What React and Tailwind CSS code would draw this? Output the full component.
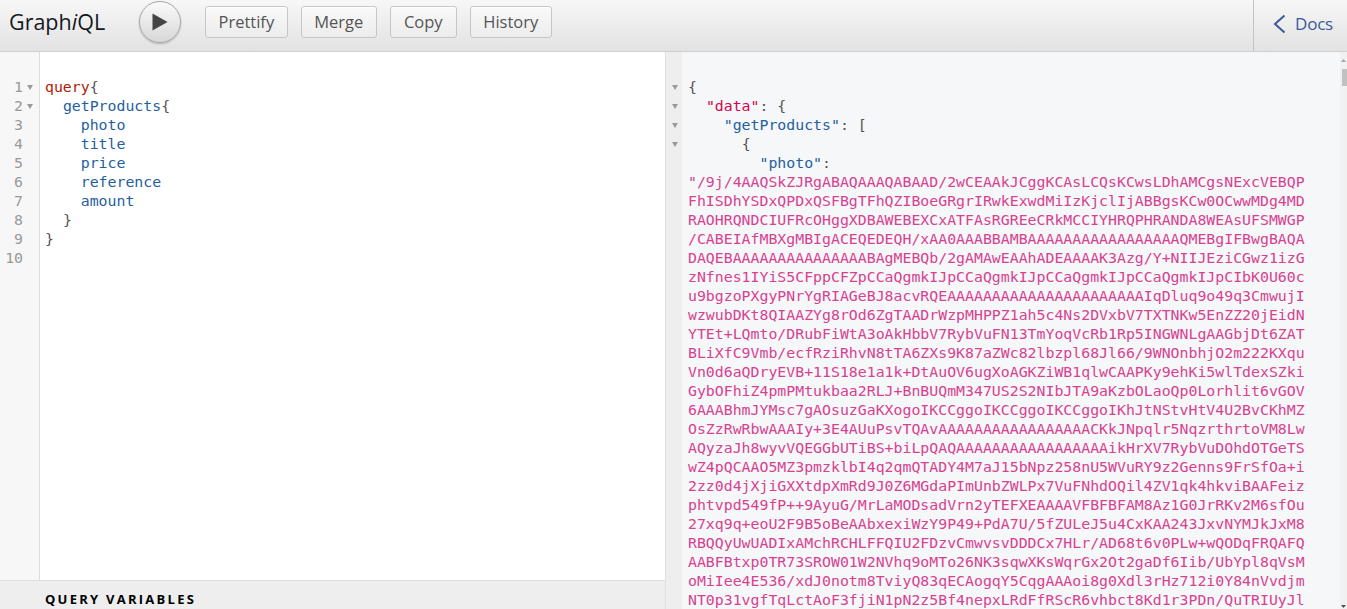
const b64 = [
  '"/9j/4AAQSkZJRgABAQAAAQABAAD/2wCEAAkJCggKCAsLCQsKCwsLDhAMCgsNExcVEBQP',
  'FhISDhYSDxQPDxQSFBgTFhQZIBoeGRgrIRwkExwdMiIzKjclIjABBgsKCw0OCwwMDg4MD',
  'RAOHRQNDCIUFRcOHggXDBAWEBEXCxATFAsRGREeCRkMCCIYHRQPHRANDA8WEAsUFSMWGP',
  '/CABEIAfMBXgMBIgACEQEDEQH/xAA0AAABBAMBAAAAAAAAAAAAAAAAAQMEBgIFBwgBAQA',
  'DAQEBAAAAAAAAAAAAAAAABAgMEBQb/2gAMAwEAAhADEAAAAK3Azg/Y+NIIJEziCGwz1izG',
  'zNfnes1IYiS5CFppCFZpCCaQgmkIJpCCaQgmkIJpCCaQgmkIJpCCaQgmkIJpCIbK0U60c',
  'u9bgzoPXgyPNrYgRIAGeBJ8acvRQEAAAAAAAAAAAAAAAAAAAAAAIqDluq9o49q3CmwujI',
  'wzwubDKt8QIAAZYg8rOd6ZgTAADrWzpMHPPZ1ah5c4Ns2DVxbV7TXTNKw5EnZZ20jEidN',
  'YTEt+LQmto/DRubFiWtA3oAkHbbV7RybVuFN13TmYoqVcRb1Rp5INGWNLgAAGbjDt6ZAT',
  'BLiXfC9Vmb/ecfRziRhvN8tTA6ZXs9K87aZWc82lbzpl68Jl66/9WNOnbhjO2m222KXqu',
  'Vn0d6aQDryEVB+11S18e1a1k+DtAuOV6ugXoAGKZiWB1qlwCAAPKy9ehKi5wlTdexSZki',
  'GybOFhiZ4pmPMtukbaa2RLJ+BnBUQmM347US2S2NIbJTA9aKzbOLaoQp0Lorhlit6vGOV',
  '6AAABhmJYMsc7gAOsuzGaKXogoIKCCggoIKCCggoIKCCggoIKhJtNStvHtV4U2BvCKhMZ',
  'OsZzRwRbwAAAIy+3E4AUuPsvTQAvAAAAAAAAAAAAAAAAACKkJNpqlr5NqzrthrtoVM8Lw',
  'AQyzaJh8wyvVQEGGbUTiBS+biLpQAQAAAAAAAAAAAAAAAAAikHrXV7RybVuDOhdOTGeTS',
  'wZ4pQCAAO5MZ3pmzklbI4q2qmQTADY4M7aJ15bNpz258nU5WVuRY9z2Genns9FrSfOa+i',
  '2zz0d4jXjiGXXtdpXmRd9J0Z6MGdaPImUnbZWLPx7VuFNhdOQil4ZV1qk4hkviBAAFeiz',
  'phtvpd549fP++9AyuG/MrLaMODsadVrn2yTEFXEAAAAVFBFBFAM8Az1G0JrRKv2M6sfOu',
  '27xq9q+eoU2F9B5oBeAAbxexiWzY9P49+PdA7U/5fZULeJ5u4CxKAA243JxvNYMJkJxM8',
  'RBQQyUwUADIxAMchRCHLFFQIU2FDzvCmwvsvDDDCx7HLr/AD68t6v0PLw+wQODqFRQAFQ',
  'AABFBtxp0TR73SROW01W2NVhq9oMTo26NK3sqwXKsWqrGx2Ot2gaDf6Iib/UbYpl8qVsM',
  'oMiIee4E536/xdJ0notm8TviyQ83qECAogqY5CqgAAAoi8g0Xdl3rHz712i0Y84nVvdjm',
  'NT0p31vgfTqLctAoF3fjiN1pN2z5Bf4nepxLRdFfRScR6vhbct8Kd1r3PDn/QuTRIUyJl',
];

const queryLines = [
  [['text-[#b11a04]', 'query'], ['text-[#555555]', '{']],
  [['', '  '], ['text-[#1f61a0]', 'getProducts'], ['text-[#555555]', '{']],
  [['', '    '], ['text-[#1f61a0]', 'photo']],
  [['', '    '], ['text-[#1f61a0]', 'title']],
  [['', '    '], ['text-[#1f61a0]', 'price']],
  [['', '    '], ['text-[#1f61a0]', 'reference']],
  [['', '    '], ['text-[#1f61a0]', 'amount']],
  [['', '  '], ['text-[#555555]', '}']],
  [['text-[#555555]', '}']],
  [['', ' ']],
];

const resultHead = [
  [['text-[#555555]', '{']],
  [['', '  '], ['text-[#d2054e]', '"data"'], ['text-[#555555]', ': {']],
  [['', '    '], ['text-[#1f61a0]', '"getProducts"'], ['text-[#555555]', ': [']],
  [['', '      '], ['text-[#555555]', '{']],
  [['', '        '], ['text-[#1f61a0]', '"photo"'], ['text-[#555555]', ':']],
];

function Fold() {
  return (
    <svg width="6" height="5" viewBox="0 0 6 5" className="block">
      <path d="M0 0H6L3 5Z" fill="#9a9a9a" />
    </svg>
  );
}

function Code({ parts }) {
  return (
    <div className="h-[19px] leading-[19px] whitespace-pre">
      {parts.map(([c, t], i) => (
        <span key={i} className={c}>{t}</span>
      ))}
    </div>
  );
}

function ToolButton({ children }) {
  return (
    <button className="h-[32px] min-w-[67px] px-[12.5px] rounded-[3px] border border-[#c6c6c6] bg-gradient-to-b from-[#f9f9f9] to-[#ececec] text-[#555555] text-[16.5px] leading-none shadow-[0_1px_0_#fff_inset]">
      {children}
    </button>
  );
}

export default function App() {
  const mono = "font-['DejaVu_Sans_Mono',monospace] text-[14.85px]";
  return (
    <div className="h-screen w-full overflow-hidden flex flex-col font-['Open_Sans',sans-serif] bg-white">
      <header className="h-[52px] shrink-0 flex items-stretch bg-gradient-to-b from-[#f7f7f7] to-[#e2e2e2] border-b border-[#d0d0d0]">
        <div className="flex-1 flex items-center pl-[9px] pb-[7px]">
          <div className="w-[130px] text-[21.5px] text-[#141823]">
            Graph<em>i</em>QL
          </div>
          <button className="w-[42px] h-[42px] rounded-full border border-[#a8a8a8] bg-gradient-to-b from-[#fafafa] to-[#d8d8d8] shadow-[0_1px_2px_rgba(0,0,0,0.25)] flex items-center justify-center">
            <svg width="16" height="18" viewBox="0 0 16 18">
              <path d="M0.5 0.5L15.5 9L0.5 17.5Z" fill="#444444" />
            </svg>
          </button>
          <div className="ml-6 flex gap-[13px]">
            <ToolButton>Prettify</ToolButton>
            <ToolButton>Merge</ToolButton>
            <ToolButton>Copy</ToolButton>
            <ToolButton>History</ToolButton>
          </div>
        </div>
        <div className="w-[94px] border-l border-[#c4c4c4] flex items-center pl-[19px] gap-[9px] text-[#3b5998] text-[17px] tracking-[-0.2px] pb-[3px]">
          <svg width="13" height="20" viewBox="0 0 13 20">
            <path d="M11.5 1.5L2 10L11.5 18.5" fill="none" stroke="#3b5998" strokeWidth="2" />
          </svg>
          <span>Docs</span>
        </div>
      </header>

      <main className="flex-1 min-h-0 flex">
        <section className="w-[665px] shrink-0 flex flex-col">
          <div className="flex-1 min-h-0 flex">
            <div className="w-[40px] shrink-0 bg-[#f7f7f7] border-r border-[#dddddd] pt-[26px] text-[#999999]">
              <div className={mono}>
                {queryLines.map((_, i) => (
                  <div key={i} className="h-[19px] leading-[19px] flex items-center">
                    <span className="w-[23px] text-right">{i + 1}</span>
                    {i < 2 && <span className="ml-[4px]"><Fold /></span>}
                  </div>
                ))}
              </div>
            </div>
            <div className={`flex-1 pt-[26px] pl-[5px] ${mono}`}>
              {queryLines.map((l, i) => (
                <Code key={i} parts={l} />
              ))}
            </div>
          </div>
          <div className="h-[29px] shrink-0 bg-[#eeeeee] border-t border-[#e0e0e0] pl-[45px] pt-[9px] text-[13px] leading-[18px] font-bold tracking-[2.25px] text-[#000000]">
            QUERY VARIABLES
          </div>
        </section>

        <section className="flex-1 min-w-0 flex bg-[#f6f7f8] border-l border-[#e0e0e0]">
          <div className="w-[16px] shrink-0 bg-[#eeeeee] pt-[26px]">
            {[0, 1, 2, 3].map((i) => (
              <div key={i} className="h-[19px] flex items-center pl-[6px]"><Fold /></div>
            ))}
          </div>
          <div className={`flex-1 min-w-0 overflow-hidden pt-[26px] pl-[6px] ${mono}`}>
            {resultHead.map((l, i) => (
              <Code key={i} parts={l} />
            ))}
            {b64.map((l, i) => (
              <div key={i} className="h-[19px] leading-[19px] whitespace-pre text-[#d64292]">{l.replace(/^DAQEBAAAA/, 'DAQEBAAA')}</div>
            ))}
          </div>
          <div className="w-[7px] shrink-0 bg-[#f1f1f1] flex flex-col items-end">
            <div className="h-[17px] w-full flex items-center justify-center">
              <svg width="5" height="3" viewBox="0 0 5 3"><path d="M0 3L2.5 0L5 3Z" fill="#a3a3a3" /></svg>
            </div>
            <div className="w-[5px] h-[17px] bg-[#c1c1c1]" />
            <div className="flex-1" />
            <svg width="5" height="3" viewBox="0 0 5 3" className="mb-[1px] mr-[1px]"><path d="M0 0L2.5 3L5 0Z" fill="#505050" /></svg>
          </div>
        </section>
      </main>
    </div>
  );
}
